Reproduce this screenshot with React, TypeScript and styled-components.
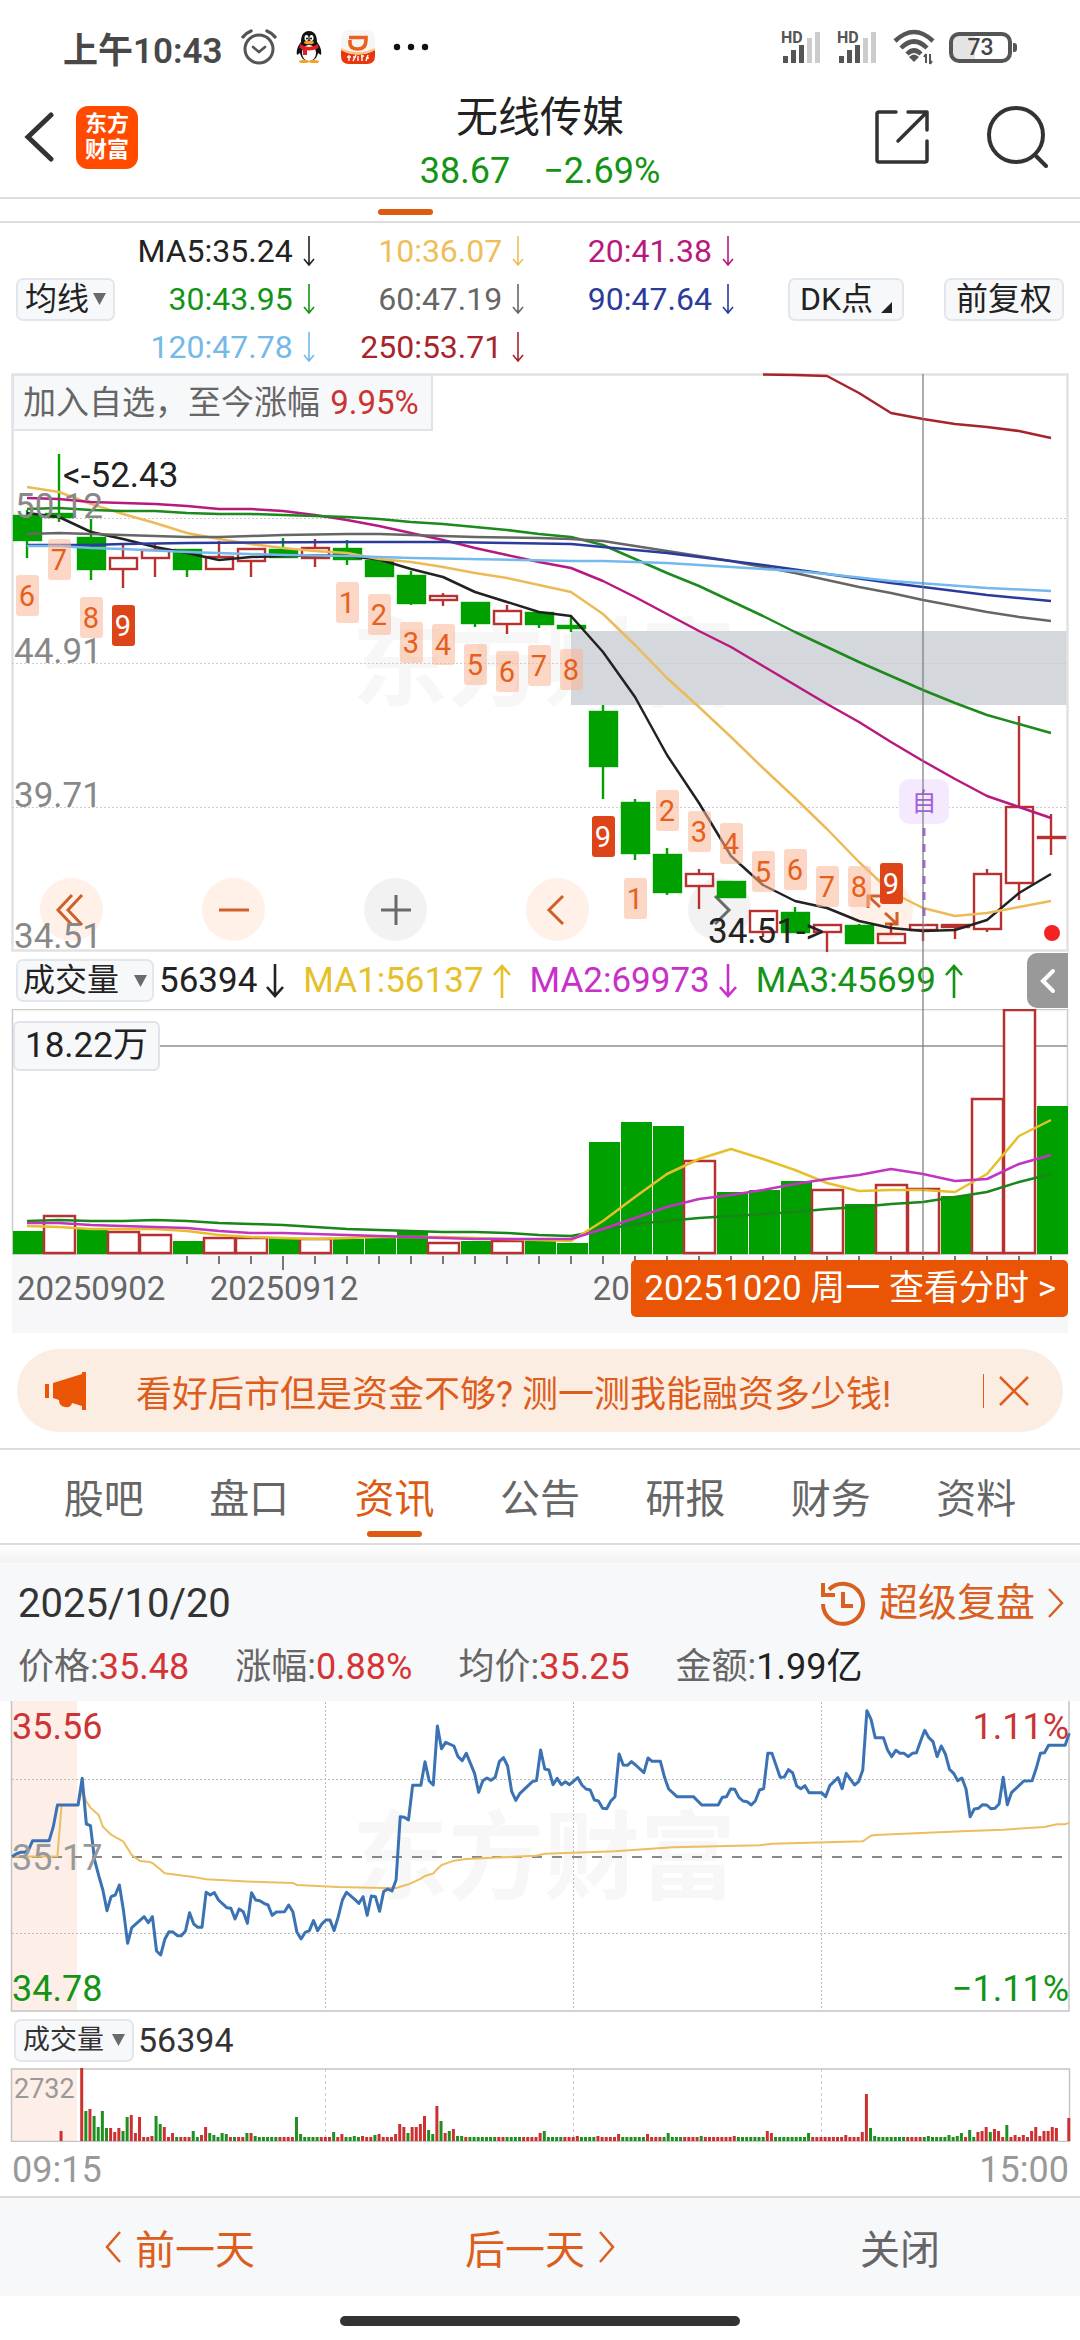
import React from 'react';
import styled, { createGlobalStyle } from 'styled-components';

const GlobalStyle = createGlobalStyle`
  * { box-sizing: border-box; }
  body {
    margin: 0;
    background: #fff;
    color: #222;
    font-family: Roboto, 'Noto Sans CJK SC', sans-serif;
  }
  button, select { font: inherit; color: inherit; border: 0; background: none; padding: 0; margin: 0; }
  svg { display: block; flex: none; }
`;

const RED = '#b83030';
const GREEN = '#00a000';
const ORANGE = '#dd5a12';

/* ---------- shared pieces ---------- */

const Page = styled.main`
  width: 100%;
  display: flex;
  flex-direction: column;
`;

const IconButton = styled.button`
  display: flex;
  align-items: center;
  justify-content: center;
`;

const SelectBox = styled.label<{ $size: number; $gap: number; $pad: number }>`
  display: flex;
  align-items: center;
  gap: ${(p) => p.$gap}px;
  height: 43px;
  padding: 0 ${(p) => p.$pad}px;
  border: 2px solid #e3e6ec;
  border-radius: 7px;
  background: #f7f8fa;
  font-size: ${(p) => p.$size}px;
  line-height: 39px;
`;

const BareSelect = styled.select`
  appearance: none;
  outline: none;
`;

const Caret = () => (
  <svg width="13" height="12" viewBox="0 0 13 12">
    <path d="M0 0H13L6.5 12Z" fill="#6a6a6a" />
  </svg>
);

type DropProps = { label: string; value: string; size: number; gap: number; pad: number };
const Dropdown = ({ label, value, size, gap, pad }: DropProps) => (
  <SelectBox $size={size} $gap={gap} $pad={pad}>
    <BareSelect aria-label={label} defaultValue={value}>
      <option>{value}</option>
    </BareSelect>
    <Caret />
  </SelectBox>
);

const Arrow = ({ up, thick, color }: { up?: boolean; thick?: boolean; color: string }) => (
  <svg width="18" height="34" viewBox="0 0 18 34" fill="none" stroke={color} strokeWidth={thick ? 2.6 : 1.6}>
    {thick ? (
      <path d={up ? 'M9 34V2M1 11L9 2L17 11' : 'M9 0V32M1 23L9 32L17 23'} />
    ) : (
      <path d="M9 2V31M4 25L9 31L14 25" />
    )}
  </svg>
);

/* ---------- status bar ---------- */

const StatusBar = styled.header`
  display: flex;
  align-items: center;
  height: 94px;
  padding: 0 68px 0 63px;
`;
const StatusGroup = styled.div<{ $gap: number }>`
  display: flex;
  align-items: center;
  gap: ${(p) => p.$gap}px;
`;
const Clock = styled.time`
  font-size: 35px;
  font-weight: 600;
  color: #484848;
`;
const Spacer = styled.div`
  flex: 1;
`;

const AlarmIcon = () => (
  <svg width="36" height="36" viewBox="0 0 36 36" fill="none" stroke="#555" strokeWidth="3" strokeLinecap="round">
    <circle cx="18" cy="20" r="14" />
    <path d="M2 8Q5 4 10 2M34 8Q31 4 26 2" strokeWidth="3.4" />
    <path d="M12 18L18 23L24 18" strokeWidth="2.6" />
  </svg>
);
const PenguinIcon = () => (
  <svg width="28" height="34" viewBox="0 0 28 34">
    <path d="M14 1C8 1 6 6 6 12C3 16 1 20 2 25L5 23C6 28 9 31 14 31C19 31 22 28 23 23L26 25C27 20 25 16 22 12C22 6 20 1 14 1Z" fill="#111" />
    <ellipse cx="14" cy="23" rx="7" ry="8" fill="#fff" />
    <path d="M5 14Q14 20 23 14L23.5 18Q14 23 4.5 18Z" fill="#e11f26" />
    <path d="M8 18L8 25L12 25L12 20Z" fill="#e11f26" />
    <ellipse cx="11.5" cy="8" rx="2" ry="3" fill="#fff" />
    <ellipse cx="16.5" cy="8" rx="2" ry="3" fill="#fff" />
    <circle cx="12" cy="8.5" r="1" />
    <circle cx="16" cy="8.5" r="1" />
    <ellipse cx="14" cy="12.5" rx="5" ry="1.8" fill="#f5a11b" />
    <ellipse cx="9" cy="31.5" rx="5" ry="1.6" fill="#f5a11b" />
    <ellipse cx="19" cy="31.5" rx="5" ry="1.6" fill="#f5a11b" />
  </svg>
);
const RideIcon = () => (
  <svg width="34" height="34" viewBox="0 0 34 34">
    <rect width="34" height="34" rx="8" fill="#f8f6f5" />
    <path d="M0 20Q17 29 34 20V26Q34 34 26 34H8Q0 34 0 26Z" fill="#e8370f" />
    <path d="M0 20Q17 29 34 20V18Q17 26 0 18Z" fill="#f9c48a" />
    <path d="M8 7.500H25V10Q25 19 17 19Q9 19 9 13V10" fill="none" stroke="#e9611c" strokeWidth="3.600" />
    <path d="M6 27H10M8 25V31M12 27H15M12 31L15 25M17 26V31M20 26H23M21 25V31M25 28H28M27 25L25 31" stroke="#fff" strokeWidth="1.400" />
  </svg>
);
const MoreDots = () => (
  <svg width="36" height="8" viewBox="0 0 36 8" fill="#111">
    <circle cx="4" cy="4" r="3.2" />
    <circle cx="18" cy="4" r="3.2" />
    <circle cx="32" cy="4" r="3.2" />
  </svg>
);
const SignalIcon = () => (
  <svg width="42" height="34" viewBox="0 0 42 34">
    <text x="0" y="13" fontSize="16" fontWeight="700" fill="#555">HD</text>
    {[7, 13, 18, 25, 31].map((h, i) => (
      <rect key={i} x={2 + i * 8} y={33 - h} width="5" height={h} fill={i < 3 ? '#555' : '#ccc'} />
    ))}
  </svg>
);
const WifiIcon = () => (
  <svg width="42" height="36" viewBox="0 0 42 36" fill="none" stroke="#555" strokeWidth="4.5">
    <path d="M2 12Q21 -6 40 12" />
    <path d="M8 19Q21 6 34 19" />
    <path d="M14 25Q21 18 28 25" />
    <path d="M21 33L16 28Q21 23 26 28Z" fill="#555" stroke="none" />
    <path d="M33 25V34M31 28L33 25M37 25V35M39 32L37 35" strokeWidth="2" />
  </svg>
);
const Battery = styled.div`
  position: relative;
  width: 63px;
  height: 31px;
  border: 4px solid #555;
  border-radius: 10px;
  background: linear-gradient(90deg, #e4e4e4 40%, #fff 40%);
  font-size: 23px;
  font-weight: 500;
  line-height: 24px;
  text-align: center;
  color: #444;
  &::after {
    content: '';
    position: absolute;
    right: -9px;
    top: 7px;
    width: 4px;
    height: 9px;
    border-radius: 0 3px 3px 0;
    background: #555;
  }
`;

/* ---------- header ---------- */

const Header = styled.header`
  display: grid;
  grid-template-columns: 1fr auto 1fr;
  align-items: start;
  height: 105px;
  padding: 0 22px;
  border-bottom: 2px solid #dcdcdc;
`;
const HeaderSide = styled.div<{ $end?: boolean; $gap: number }>`
  display: flex;
  align-items: center;
  justify-content: ${(p) => (p.$end ? 'flex-end' : 'flex-start')};
  gap: ${(p) => p.$gap}px;
  height: 86px;
  padding-right: ${(p) => (p.$end ? 10 : 0)}px;
`;
const Logo = styled.div`
  width: 62px;
  height: 63px;
  padding: 5px 0;
  border-radius: 12px;
  background: #ff4a00;
  color: #fff;
  font-size: 22px;
  font-weight: 700;
  line-height: 26px;
  text-align: center;
`;
const TitleBlock = styled.div`
  text-align: center;
`;
const Title = styled.h1`
  margin: 0;
  font-size: 42px;
  font-weight: 400;
  line-height: 48px;
`;
const Quote = styled.div`
  display: flex;
  justify-content: center;
  gap: 33px;
  color: #149414;
  font-size: 36px;
  line-height: 58px;
`;
const PagerStrip = styled.div`
  height: 24px;
  padding-top: 10px;
  border-bottom: 2px solid #dcdcdc;
`;
const PagerMark = styled.div`
  width: 55px;
  height: 6px;
  margin-left: 35%;
  border-radius: 3px;
  background: ${ORANGE};
`;

/* ---------- moving average legend ---------- */

const Legend = styled.section`
  display: flex;
  align-items: center;
  height: 150px;
  padding: 2px 16px 0;
`;
const LegendGrid = styled.div`
  flex: 1;
  display: grid;
  grid-template-columns: 203fr 210fr 210fr;
  margin-right: 51px;
`;
const LegendItem = styled.div<{ $color: string }>`
  display: flex;
  align-items: center;
  justify-content: flex-end;
  gap: 7px;
  height: 48px;
  font-size: 32px;
  color: ${(p) => p.$color};
`;
const ChipRow = styled.div`
  display: flex;
  gap: 40px;
`;
const Chip = styled.button`
  display: flex;
  align-items: center;
  gap: 8px;
  height: 43px;
  padding: 0 10px;
  border: 2px solid #e3e6ec;
  border-radius: 7px;
  background: #f7f8fa;
  font-size: 32px;
  line-height: 39px;
`;

const LEGEND = [
  ['MA5:35.24', '#222'],
  ['10:36.07', '#efbe5a'],
  ['20:41.38', '#b8197e'],
  ['30:43.95', '#149414'],
  ['60:47.19', '#666'],
  ['90:47.64', '#2b3b9c'],
  ['120:47.78', '#74b9e8'],
  ['250:53.71', '#a8242c'],
];

/* ---------- candle chart ---------- */

const cx = (i: number) => 27 + 32 * i;
const line = (ys: number[]) => ys.map((y, i) => `${cx(i)},${y}`).join(' ');
const sparse = (pts: number[][]) => pts.map(([i, y]) => `${cx(i)},${y}`).join(' ');

// [isUp, high, bodyTop, bodyBottom, low]
const CANDLES = [
  [0, 510, 516, 540, 558], [0, 454, 514, 517, 522], [0, 519, 538, 569, 580], [1, 545, 558, 569, 588],
  [1, 544, 550, 558, 577], [0, 550, 550, 569, 577], [1, 541, 557, 569, 569], [1, 549, 549, 561, 577],
  [0, 538, 550, 557, 558], [1, 539, 548, 558, 567], [0, 540, 549, 559, 565], [0, 561, 561, 576, 577],
  [0, 571, 576, 603, 605], [1, 593, 596, 600, 606], [0, 603, 603, 623, 627], [1, 605, 611, 624, 634],
  [0, 613, 613, 624, 628], [0, 615, 626, 628, 632], [0, 705, 712, 766, 799], [0, 799, 803, 853, 860],
  [0, 848, 855, 892, 895], [1, 869, 874, 886, 909], [0, 881, 882, 897, 898], [1, 910, 911, 932, 937],
  [0, 907, 913, 932, 932], [1, 924, 925, 932, 952], [0, 924, 926, 943, 944], [1, 923, 934, 943, 943],
  [1, 924, 925, 930, 941], [1, 924, 925, 927, 939], [1, 869, 874, 929, 932], [1, 716, 807, 883, 900],
  [1, 814, 837, 838, 855],
];

// [candle index, digit, top, isFinal]
const TAGS = [
  [0, 6, 575, 0], [1, 7, 539, 0], [2, 8, 597, 0], [3, 9, 605, 1], [10, 1, 582, 0], [11, 2, 594, 0],
  [12, 3, 622, 0], [13, 4, 624, 0], [14, 5, 644, 0], [15, 6, 651, 0], [16, 7, 645, 0], [17, 8, 649, 0],
  [18, 9, 816, 1], [19, 1, 878, 0], [20, 2, 790, 0], [21, 3, 811, 0], [22, 4, 823, 0], [23, 5, 851, 0],
  [24, 6, 849, 0], [25, 7, 866, 0], [26, 8, 866, 0], [27, 9, 863, 1],
];

const MA5 = [513, 517, 532, 539, 547, 553, 560, 557, 556, 555.5, 556, 559.5, 569, 577, 592, 602, 612, 616, 652, 697, 755, 803, 856, 885, 901, 908, 921, 928, 931, 930, 920, 893, 874];
const MA10 = [487, 492, 504, 514, 523, 533, 539, 544, 548, 551, 553, 559, 562, 567, 573, 578, 585, 592, 614, 645, 678, 707, 737, 768, 798, 829, 862, 892, 908, 916, 913, 907, 901];
const MA20 = [498, 499, 502, 503, 504, 506, 509, 509, 511, 515, 520, 526, 533, 540, 548, 555, 562, 568, 581, 597, 614, 631, 647, 666, 685, 704, 722, 742, 761, 779, 796, 807, 818];
const MA30 = [509, 508, 510, 511, 511, 513, 514, 514, 515, 516, 517, 519, 522, 524, 527, 530, 534, 537, 545, 559, 573, 586, 601, 616, 632, 647, 662, 676, 690, 703, 715, 724, 733];
const MA60 = [534, 533, 534, 535, 536, 537, 537, 536, 535, 534.5, 534, 534, 535, 536, 537, 537.5, 538, 539, 541, 546, 551, 556, 561, 567, 573, 580, 587, 593, 600, 606, 612, 617, 621];
const MA90 = [[0, 545], [2, 545], [3, 544], [5, 543], [10, 542], [13, 542], [15, 543], [17, 544], [18, 547], [20, 553], [22, 561], [23, 565], [25, 574], [27, 583], [28, 587], [30, 595], [32, 601]];
const MA120 = [[0, 546], [1, 546], [2, 548], [3, 549], [5, 552], [8, 555], [10, 556], [12, 558], [17, 561], [18, 561], [20, 563], [22, 567], [24, 571], [25, 574], [27, 581], [30, 588], [32, 591]];
const MA250 = [[23, 374.5], [24, 375], [25, 376], [26, 393], [27, 413], [28, 419], [29, 424], [30, 427], [31, 431], [32, 438]];

const ChartStack = styled.section`
  position: relative;
`;
const ChartFrame = styled.div`
  position: relative;
`;
const ChartSvg = styled.svg`
  position: relative;
  width: 100%;
  height: auto;
  pointer-events: none;
`;
const Crosshair = styled.div`
  position: absolute;
  top: 1px;
  bottom: -6px;
  left: 85.4%;
  width: 2px;
  background: rgba(120, 120, 120, 0.6);
  pointer-events: none;
`;
const GainNote = styled.div`
  position: absolute;
  top: 1px;
  left: 12px;
  padding: 0 12px 0 9px;
  border: 2px solid #e0e4ea;
  background: #f7f8fa;
  color: #666;
  font-size: 33px;
  line-height: 53px;
`;
const Rise = styled.span`
  margin-left: 2px;
  color: #cc3333;
`;
const RoundButtons = styled.div`
  position: absolute;
  bottom: 11px;
  left: 40px;
  display: flex;
  gap: 99px;
`;
const RoundButton = styled.button<{ $grey?: boolean }>`
  display: flex;
  align-items: center;
  justify-content: center;
  width: 63px;
  height: 63px;
  border-radius: 50%;
  background: ${(p) => (p.$grey ? '#f2f2f2' : '#fff0e8')};
`;

const ROUND = [
  { name: '移到最左', d: 'M16 1L2 16L16 31M26 1L12 16L26 31' },
  { name: '缩小', d: 'M1 16H31' },
  { name: '放大', d: 'M1 16H31M16 1V31', grey: true },
  { name: '左移', d: 'M21 2L7 16L21 30' },
  { name: '右移', d: 'M11 2L25 16L11 30', grey: true },
  { name: '全屏', d: 'M2 14V2H14M2 2L14 13M31 18V30H19M31 30L19 19' },
];

const PriceChart = () => (
  <ChartFrame>
    <RoundButtons>
      {ROUND.map((b) => (
        <RoundButton key={b.name} $grey={b.grey} aria-label={b.name}>
          <svg width="32" height="32" viewBox="0 0 32 32" fill="none" overflow="visible" stroke={b.grey ? '#6a6a6a' : '#d0602a'} strokeWidth="3">
            <path d={b.d} />
          </svg>
        </RoundButton>
      ))}
    </RoundButtons>
    <ChartSvg viewBox="0 373 1080 579" fill="none">
      <text x="352" y="698" fontSize="96" fontWeight="700" fill="#f7f7f7">东方财富</text>
      <rect x="571" y="631" width="496" height="74" fill="#d4d7dc" />
      <rect x="12.5" y="374.5" width="1055" height="576" stroke="#e2e2e2" strokeWidth="2.5" />
      {[518, 663, 807].map((y) => (
        <line key={y} x1="12" x2="1067" y1={y + 0.5} y2={y + 0.5} stroke="#ccc" strokeDasharray="2 2" />
      ))}
      {CANDLES.map(([up, hi, top, bottom, lo], i) => (
        <g key={i} stroke={up ? RED : GREEN} strokeWidth="2.4">
          <path d={`M${cx(i)} ${hi}V${top}M${cx(i)} ${bottom}V${lo}`} />
          <rect x={cx(i) - 13} y={top} width="27" height={bottom - top} fill={up ? 'none' : GREEN} />
        </g>
      ))}
      <g strokeWidth="2.5" strokeLinejoin="round">
        <polyline points={line(MA5)} stroke="#222" />
        <polyline points={line(MA10)} stroke="#ecbb58" />
        <polyline points={line(MA20)} stroke="#b8197e" />
        <polyline points={line(MA30)} stroke="#1c8a1c" />
        <polyline points={line(MA60)} stroke="#666" />
        <polyline points={sparse(MA90)} stroke="#2b3b9c" />
        <polyline points={sparse(MA120)} stroke="#74b9ee" />
        <polyline points={sparse(MA250)} stroke="#a8242c" />
      </g>
      <g fontSize="29" textAnchor="middle">
        {TAGS.map(([i, n, y, final]) => (
          <g key={i}>
            <rect x={cx(i) - 11} y={y} width="23" height="41" rx="3" fill={final ? '#dd4417' : '#fbb798'} fillOpacity={final ? 1 : 0.55} />
            <text x={cx(i)} y={y + 31} fill={final ? '#fff' : '#e4601c'}>{n}</text>
          </g>
        ))}
      </g>
      <g fontSize="35" fill="#888">
        <text x="15" y="518">50.12</text>
        <text x="14" y="663">44.91</text>
        <text x="14" y="807">39.71</text>
        <text x="14" y="948">34.51</text>
      </g>
      <g fontSize="35" fill="#222">
        <text x="63" y="487">&lt;-52.43</text>
        <text x="708" y="943">34.51-&gt;</text>
      </g>
      <line x1="924" x2="924" y1="828" y2="925" stroke="#a06ae0" strokeWidth="3" strokeDasharray="8 8" />
      <rect x="899" y="779" width="50" height="45" rx="10" fill="#f5eafd" />
      <text x="924" y="811" fontSize="25" textAnchor="middle" fill="#a060e0">自</text>
      <circle cx="1052" cy="933" r="8" fill="#f42222" />
    </ChartSvg>
    <GainNote>
      加入自选，至今涨幅 <Rise>9.95%</Rise>
    </GainNote>
  </ChartFrame>
);

/* ---------- volume ---------- */

const VolumeBarRow = styled.div`
  display: flex;
  align-items: center;
  height: 57px;
  padding-left: 16px;
  padding-right: 12px;
`;
const VolumeValue = styled.div<{ $color: string }>`
  display: flex;
  align-items: center;
  gap: 9px;
  margin-right: 19px;
  font-size: 35px;
  color: ${(p) => p.$color};
`;
const DropSlot = styled.div`
  margin-right: 5px;
`;
const CollapseTab = styled(IconButton)`
  width: 41px;
  height: 55px;
  margin-left: auto;
  border-radius: 10px 0 0 10px;
  background: #999;
`;
const VolumeMax = styled.div`
  position: absolute;
  top: 12px;
  left: 13px;
  padding: 0 10px;
  border: 2px solid #e0e4ea;
  border-radius: 6px;
  background: #f7f8fa;
  font-size: 35px;
  line-height: 46px;
`;

// [isUp, top]
const VOLUMES = [
  [0, 1231], [1, 1216], [0, 1229], [1, 1232], [1, 1235], [0, 1241], [1, 1238], [1, 1238], [0, 1238], [1, 1239], [0, 1239],
  [0, 1238], [0, 1231], [1, 1243], [0, 1241], [1, 1241], [0, 1241], [0, 1243], [0, 1142], [0, 1122], [0, 1126], [1, 1161],
  [0, 1192], [0, 1190], [0, 1181], [1, 1190], [0, 1204], [1, 1185], [1, 1189], [0, 1196], [1, 1099], [1, 1010], [0, 1106],
];
const VMA1 = [1226, 1227, 1229, 1229, 1229, 1231, 1235, 1237, 1238, 1239, 1238, 1237, 1237, 1237, 1238, 1239, 1240, 1241, 1221, 1197, 1174, 1159, 1149, 1159, 1170, 1183, 1191, 1190, 1190, 1192, 1174, 1136, 1120];
const VMA2 = [1223, 1223, 1225, 1226, 1227, 1228, 1231, 1233, 1233, 1234, 1235, 1236, 1237, 1238, 1239, 1239, 1239, 1239, 1229, 1218, 1207, 1199, 1195, 1190, 1184, 1179, 1175, 1169, 1174, 1181, 1179, 1164, 1155];
const VMA3 = [1221, 1220, 1221, 1221, 1220, 1221, 1223, 1224, 1225, 1227, 1229, 1230, 1231, 1232, 1232, 1233, 1235, 1236, 1230, 1224, 1221, 1218, 1216, 1214, 1212, 1209, 1207, 1204, 1202, 1197, 1192, 1182, 1174];

const VolumeChart = () => (
  <ChartFrame>
    <ChartSvg viewBox="0 1009 1080 246" fill="none">
      <rect x="12.5" y="1009.5" width="1055" height="245" stroke="#ccc" strokeWidth="1.5" />
      <line x1="158" x2="1067" y1="1046" y2="1046" stroke="#aaa" strokeWidth="2" />
      {VOLUMES.map(([up, top], i) =>
        up ? (
          <rect key={i} x={cx(i) - 15} y={top} width="31" height={1253 - top} fill="#fff" stroke={RED} strokeWidth="2.5" />
        ) : (
          <rect key={i} x={cx(i) - 14} y={top} width="31" height={1254 - top} fill={GREEN} />
        ),
      )}
      <g strokeWidth="2.5" strokeLinejoin="round">
        <polyline points={line(VMA3)} stroke="#1a861a" />
        <polyline points={line(VMA1)} stroke="#e6c02a" />
        <polyline points={line(VMA2)} stroke="#c234c2" />
      </g>
    </ChartSvg>
    <VolumeMax>18.22万</VolumeMax>
  </ChartFrame>
);

const DayButton = styled.button`
  position: absolute;
  top: 5px;
  right: 12px;
  height: 57px;
  padding: 0 12px 0 13px;
  border-radius: 5px;
  background: #e95504;
  color: #fff;
  font-size: 35px;
  line-height: 55px;
  white-space: nowrap;
`;

const DateAxis = () => (
  <ChartFrame>
    <ChartSvg viewBox="0 0 1080 78">
      <rect x="12" width="1056" height="78" fill="#f7f7fa" />
      {Array.from({ length: 28 }, (_, n) => n + 5).map((i) => (
        <line key={i} x1={cx(i)} x2={cx(i)} y1="1" y2={i % 12 === 8 ? 15 : 9} stroke="#777" strokeWidth="2" />
      ))}
      <g fontSize="33" fill="#666">
        <text x="17" y="45">20250902</text>
        <text x="284" y="45" textAnchor="middle">20250912</text>
        <text x="667" y="45" textAnchor="middle">20250930</text>
      </g>
    </ChartSvg>
    <DayButton>20251020 周一 查看分时 &gt;</DayButton>
  </ChartFrame>
);

/* ---------- promo banner ---------- */

const Banner = styled.aside`
  display: flex;
  align-items: center;
  height: 83px;
  margin: 16px 17px;
  padding: 0 34px 0 27px;
  border-radius: 42px;
  background: #fcede3;
  color: #dd5e1c;
`;
const BannerLink = styled.a`
  flex: 1;
  margin-left: 49px;
  color: inherit;
  font-size: 36px;
  text-decoration: none;
  white-space: nowrap;
`;
const BannerClose = styled(IconButton)`
  height: 34px;
  padding-left: 15px;
  border-left: 1px solid #dd5e1c;
`;

/* ---------- tabs ---------- */

const Tabs = styled.nav`
  display: flex;
  height: 97px;
  padding: 0 31px;
  border-top: 2px solid #dcdcdc;
  border-bottom: 2px solid #dcdcdc;
`;
const Tab = styled.button<{ $active?: boolean }>`
  position: relative;
  flex: 1;
  padding-bottom: 2px;
  font-size: 40px;
  color: ${(p) => (p.$active ? ORANGE : '#666')};
  &::after {
    content: '';
    display: ${(p) => (p.$active ? 'block' : 'none')};
    position: absolute;
    bottom: 6px;
    left: 50%;
    width: 55px;
    height: 6px;
    margin-left: -28px;
    border-radius: 3px;
    background: ${ORANGE};
  }
`;
const Shade = styled.div`
  height: 18px;
  background: linear-gradient(#fff, #f2f2f2);
`;

/* ---------- intraday panel ---------- */

const DayHead = styled.section`
  height: 138px;
  padding: 0 16px 0 18px;
  background: #f7f8fa;
`;
const DayTitleRow = styled.div`
  display: flex;
  align-items: center;
  justify-content: space-between;
  height: 80px;
  font-size: 40px;
  color: #333;
`;
const ReviewLink = styled.a`
  display: flex;
  align-items: center;
  gap: 13px;
  color: #d9601f;
  font-size: 39px;
  line-height: 54px;
  text-decoration: none;
`;
const Stats = styled.dl`
  display: flex;
  gap: 46px;
  margin: 0;
  font-size: 36px;
  line-height: 48px;
`;
const Stat = styled.div`
  display: flex;
`;
const StatName = styled.dt`
  color: #666;
`;
const StatValue = styled.dd<{ $red?: boolean }>`
  margin: 0;
  color: ${(p) => (p.$red ? '#d63434' : '#222')};
`;

const STATS: [string, string, boolean][] = [
  ['价格:', '35.48', true],
  ['涨幅:', '0.88%', true],
  ['均价:', '35.25', true],
  ['金额:', '1.99亿', false],
];

// [minute, level]; three levels make one unit of chart height
const TREND = [
  [0, 500], [1, 492], [2, 487], [3, 487], [4, 480], [5, 452], [9, 452], [10, 410], [11, 345], [16, 345], [17, 265], [18, 402], [19, 407],
  [20, 510], [21, 557], [22, 600], [23, 662], [24, 620], [25, 615], [26, 585], [27, 662], [28, 760], [29, 713], [32, 680], [33, 698],
  [34, 680], [35, 783], [36, 795], [37, 748], [38, 725], [39, 726], [40, 737], [41, 737], [42, 723], [43, 668], [44, 702], [45, 712],
  [46, 712], [47, 607], [48, 615], [49, 608], [50, 630], [52, 653], [53, 655], [54, 687], [55, 657], [56, 665], [57, 700], [58, 608],
  [59, 630], [60, 632], [61, 640], [62, 645], [63, 676], [64, 666], [66, 665], [67, 645], [68, 665], [69, 727], [70, 747], [71, 727],
  [72, 722], [73, 692], [74, 722], [75, 702], [76, 690], [77, 690], [78, 722], [79, 680], [80, 630], [81, 607], [83, 628], [84, 640],
  [85, 620], [86, 676], [87, 618], [88, 620], [89, 664], [90, 604], [91, 597], [92, 603], [93, 570], [94, 380], [95, 382], [96, 390],
  [97, 286], [99, 286], [100, 215], [101, 272], [102, 285], [103, 108], [104, 176], [105, 157], [107, 168], [108, 200], [109, 212],
  [110, 190], [112, 250], [113, 307], [114, 272], [115, 264], [116, 271], [117, 262], [118, 215], [119, 203], [120, 228], [121, 305],
  [122, 331], [123, 310], [126, 275], [127, 272], [128, 180], [129, 237], [130, 240], [131, 284], [132, 265], [133, 284], [134, 275],
  [135, 284], [137, 263], [138, 285], [139, 297], [140, 300], [141, 330], [142, 333], [143, 355], [144, 356], [145, 333], [146, 320],
  [147, 192], [148, 225], [149, 226], [150, 215], [151, 225], [153, 248], [154, 204], [155, 214], [157, 214], [158, 262], [159, 297],
  [161, 320], [165, 320], [167, 345], [171, 345], [172, 322], [173, 320], [174, 297], [175, 298], [176, 322], [177, 333], [178, 335],
  [179, 345], [180, 332], [181, 300], [182, 296], [183, 190], [184, 190], [186, 262], [187, 261], [188, 239], [189, 248], [190, 288],
  [191, 296], [192, 287], [193, 308], [196, 308], [197, 320], [198, 287], [200, 263], [201, 296], [202, 250], [204, 285], [205, 275],
  [206, 240], [207, 62], [208, 88], [209, 143], [211, 143], [212, 180], [213, 200], [214, 181], [215, 190], [216, 190], [217, 200],
  [218, 190], [219, 188], [220, 153], [221, 121], [222, 143], [223, 155], [224, 200], [225, 168], [226, 192], [227, 238], [228, 250],
  [229, 272], [230, 264], [231, 297], [232, 380], [233, 357], [234, 355], [235, 344], [236, 345], [237, 356], [238, 355], [239, 342],
  [240, 262], [241, 344], [242, 308], [245, 273], [247, 272], [248, 235], [249, 190], [250, 188], [251, 166], [255, 166], [256, 130],
];
const AVERAGE = [
  [0, 500], [11, 499], [12, 345], [16, 345], [17, 300], [18, 335], [19, 353], [21, 375], [22, 410], [24, 434], [27, 455], [29, 495],
  [31, 513], [33, 515], [34, 519], [37, 550], [44, 561], [47, 568], [58, 575], [68, 579], [69, 585], [79, 591], [90, 594], [93, 594],
  [96, 583], [99, 566], [100, 558], [102, 550], [103, 537], [104, 525], [107, 512], [110, 507], [120, 501], [127, 497], [129, 491],
  [146, 484], [160, 472], [181, 466], [184, 461], [206, 454], [208, 437], [209, 435], [230, 424], [240, 419], [250, 411], [253, 403],
  [255, 403], [256, 398],
];
const mx = (m: number) => 12 + m * 4.13;
const trend = (pts: number[][]) => pts.map(([m, v]) => `${mx(m)},${v / 3 - 11}`).join(' ');

const TrendChart = () => (
  <ChartSvg viewBox="0 0 1080 311" fill="none">
    <text x="352" y="190" fontSize="96" fontWeight="700" fill="#f7f7f7">东方财富</text>
    <rect x="12" y="0" width="65" height="310" fill="#fdeee7" />
    <g stroke="#bbb" strokeWidth="1" strokeDasharray="2 2">
      {[325.5, 573.5, 821.5].map((x) => <line key={x} x1={x} x2={x} y1="1" y2="310" />)}
      {[78.5, 232.5].map((y) => <line key={y} x1="12" x2="1069" y1={y} y2={y} />)}
    </g>
    <path d="M11.5 0V310H1069V0" stroke="#c4c4c4" strokeWidth="1.5" />
    <line x1="12" x2="1069" y1="156" y2="156" stroke="#888" strokeWidth="2" strokeDasharray="10 10" />
    <polyline points={trend(AVERAGE)} stroke="#ecbf5e" strokeWidth="2" />
    <polyline points={trend(TREND)} stroke="#3a72b4" strokeWidth="3" strokeLinejoin="round" />
    <g fontSize="36">
      <text x="12" y="38" fill="#cc3333">35.56</text>
      <text x="12" y="169" fill="#999">35.17</text>
      <text x="12" y="300" fill="#149414">34.78</text>
      <text x="1069" y="38" fill="#cc3333" textAnchor="end">1.11%</text>
      <text x="1069" y="300" fill="#149414" textAnchor="end">−1.11%</text>
    </g>
  </ChartSvg>
);

const SubRow = styled.div`
  display: flex;
  align-items: center;
  gap: 4px;
  height: 56px;
  padding-left: 14px;
  font-size: 34px;
  color: #333;
`;

const UP_TICKS: Record<number, number> = {
  12: 10, 17: 73, 19: 32, 24: 13, 25: 9, 26: 13, 29: 26, 30: 8, 31: 24, 32: 4, 33: 4, 34: 5, 37: 14, 38: 4, 39: 8, 41: 4, 43: 4,
  46: 6, 47: 14, 58: 8, 80: 7, 85: 5, 89: 7, 93: 7, 94: 17, 95: 14, 97: 14, 98: 14, 99: 17, 100: 25, 103: 35, 105: 8, 107: 12,
  110: 4, 118: 4, 119: 4, 128: 8, 137: 5, 142: 5, 147: 7, 154: 7, 172: 4, 175: 5, 183: 10, 184: 8, 202: 6, 206: 9, 207: 47,
  217: 4, 234: 9, 235: 10, 236: 14, 238: 12, 239: 10, 243: 6, 245: 6, 246: 4, 247: 10, 248: 14, 249: 5, 250: 10, 251: 10,
  252: 14, 253: 13, 256: 23,
};
const DOWN_TICKS: Record<number, number> = {
  18: 30, 20: 25, 21: 14, 22: 30, 23: 13, 27: 10, 28: 24, 35: 25, 36: 17, 44: 10, 45: 4, 48: 8, 49: 6, 50: 4, 51: 8, 52: 7,
  57: 8, 59: 5, 69: 24, 70: 7, 78: 9, 83: 5, 88: 6, 96: 8, 101: 11, 102: 7, 104: 20, 106: 10, 108: 5, 109: 5, 129: 10, 138: 4,
  148: 4, 158: 4, 159: 8, 167: 5, 185: 4, 193: 8, 208: 13, 209: 5, 222: 5, 227: 6, 228: 4, 229: 5, 230: 8, 232: 11, 233: 4,
  237: 9, 241: 16,
};
const QUIET_GREEN = [[40, 40], [54, 54], [60, 64], [71, 74], [81, 84], [111, 117], [120, 123], [130, 133], [139, 141], [149, 153], [160, 162], [176, 182], [186, 193], [210, 216], [221, 226]];

const MinuteVolume = () => (
  <ChartSvg viewBox="0 0 1080 74" fill="none">
    <rect x="12" y="1" width="65" height="72" fill="#fdeee7" />
    <g stroke="#ccc" strokeDasharray="3 3">
      {[325.5, 573.5, 821.5].map((x) => <line key={x} x1={x} x2={x} y1="1" y2="73" />)}
    </g>
    <rect x="11.5" y="1" width="1058" height="72.5" stroke="#c4c4c4" strokeWidth="1.5" />
    <text x="14" y="30" fontSize="27" fill="#999">2732</text>
    {Array.from({ length: 245 }, (_, n) => n + 12).map((m) => {
      const quiet = m >= 38 && m < 254 ? 4 : 0;
      const h = UP_TICKS[m] ?? DOWN_TICKS[m] ?? quiet;
      const down = m in DOWN_TICKS || (!(m in UP_TICKS) && QUIET_GREEN.some(([a, b]) => m >= a && m <= b));
      return <rect key={m} x={mx(m) - 2} y={73 - h} width="3" height={h} fill={down ? '#1f8f1f' : '#cc3030'} />;
    })}
  </ChartSvg>
);

const TimeRow = styled.div`
  display: flex;
  align-items: center;
  justify-content: space-between;
  height: 54px;
  padding: 2px 11px 0 12px;
  font-size: 36px;
  color: #999;
`;
const Footer = styled.footer`
  display: grid;
  grid-template-columns: repeat(3, 1fr);
  height: 100px;
  border-top: 2px solid #dcdcdc;
  background: #f7f8fa;
`;
const FooterButton = styled.button<{ $muted?: boolean }>`
  display: flex;
  align-items: center;
  justify-content: center;
  gap: 13px;
  font-size: 40px;
  color: ${(p) => (p.$muted ? '#666' : '#dd5e1c')};
`;
const HomeArea = styled.div`
  display: flex;
  justify-content: center;
  height: 44px;
  padding-top: 20px;
`;
const HomeBar = styled.div`
  width: 37%;
  height: 10px;
  border-radius: 5px;
  background: #333;
`;

const Chevron = ({ left }: { left?: boolean }) => (
  <svg width="17" height="32" viewBox="0 0 17 32" fill="none" stroke="currentColor" strokeWidth="2.5">
    <path d={left ? 'M15 1L2 16L15 31' : 'M2 1L15 16L2 31'} />
  </svg>
);

const TABS = ['股吧', '盘口', '资讯', '公告', '研报', '财务', '资料'];

export default function App() {
  return (
    <Page>
      <GlobalStyle />
      <StatusBar>
        <StatusGroup $gap={18}>
          <Clock>上午10:43</Clock>
          <AlarmIcon />
          <PenguinIcon />
          <RideIcon />
          <MoreDots />
        </StatusGroup>
        <Spacer />
        <StatusGroup $gap={14}>
          <SignalIcon />
          <SignalIcon />
          <WifiIcon />
          <Battery>73</Battery>
        </StatusGroup>
      </StatusBar>

      <Header>
        <HeaderSide $gap={22}>
          <IconButton aria-label="返回">
            <svg width="32" height="52" viewBox="0 0 32 52" fill="none" stroke="#333" strokeWidth="5" strokeLinecap="round">
              <path d="M29 4L6 26L29 48" />
            </svg>
          </IconButton>
          <Logo>东方<br />财富</Logo>
        </HeaderSide>
        <TitleBlock>
          <Title>无线传媒</Title>
          <Quote>
            <span>38.67</span>
            <span>−2.69%</span>
          </Quote>
        </TitleBlock>
        <HeaderSide $end $gap={56}>
          <IconButton aria-label="分享">
            <svg width="56" height="56" viewBox="0 0 56 56" fill="none" stroke="#333" strokeWidth="3.5" strokeLinecap="round" strokeLinejoin="round">
              <path d="M22 3H5Q3 3 3 5V51Q3 53 5 53H51Q53 53 53 51V32" />
              <path d="M34 3H53V21M53 3L24 32" />
            </svg>
          </IconButton>
          <IconButton aria-label="搜索">
            <svg width="62" height="62" viewBox="0 0 62 62" fill="none" stroke="#333" strokeWidth="4" strokeLinecap="round">
              <circle cx="30" cy="29" r="27" />
              <path d="M49 49L60 60" />
            </svg>
          </IconButton>
        </HeaderSide>
      </Header>
      <PagerStrip>
        <PagerMark />
      </PagerStrip>

      <Legend>
        <Dropdown label="指标" value="均线" size={32} gap={3} pad={7} />
        <LegendGrid>
          {LEGEND.map(([text, color]) => (
            <LegendItem key={text} $color={color}>
              {text}
              <Arrow color={color} />
            </LegendItem>
          ))}
        </LegendGrid>
        <ChipRow>
          <Chip>
            DK点
            <svg width="11" height="28" viewBox="0 0 11 28">
              <path d="M11 17V28H0Z" fill="#222" />
            </svg>
          </Chip>
          <Chip>前复权</Chip>
        </ChipRow>
      </Legend>

      <ChartStack>
        <PriceChart />
        <VolumeBarRow>
          <DropSlot>
            <Dropdown label="副图指标" value="成交量" size={32} gap={14} pad={5} />
          </DropSlot>
          <VolumeValue $color="#222">56394<Arrow thick color="#222" /></VolumeValue>
          <VolumeValue $color="#e6c02a">MA1:56137<Arrow thick up color="#e6c02a" /></VolumeValue>
          <VolumeValue $color="#c930c9">MA2:69973<Arrow thick color="#c930c9" /></VolumeValue>
          <VolumeValue $color="#149414">MA3:45699<Arrow thick up color="#149414" /></VolumeValue>
          <CollapseTab aria-label="展开">
            <svg width="16" height="26" viewBox="0 0 16 26" fill="none" stroke="#fff" strokeWidth="4" strokeLinecap="round">
              <path d="M13 3L3 13L13 23" />
            </svg>
          </CollapseTab>
        </VolumeBarRow>
        <VolumeChart />
        <Crosshair />
      </ChartStack>
      <DateAxis />

      <Banner>
        <svg width="43" height="38" viewBox="0 0 43 38" fill="#e95504">
          <path d="M1 12H5V26H1ZM9 11L38 2V0H42V38H38V34L28 31Q27 36 21 35Q15 34 15 28L9 26Z" />
        </svg>
        <BannerLink href="#margin">看好后市但是资金不够? 测一测我能融资多少钱!</BannerLink>
        <BannerClose aria-label="关闭广告">
          <svg width="30" height="30" viewBox="0 0 30 30" fill="none" stroke="currentColor" strokeWidth="2.5">
            <path d="M1 1L29 29M29 1L1 29" />
          </svg>
        </BannerClose>
      </Banner>

      <Tabs>
        {TABS.map((t) => (
          <Tab key={t} $active={t === '资讯'}>{t}</Tab>
        ))}
      </Tabs>
      <Shade />

      <DayHead>
        <DayTitleRow>
          2025/10/20
          <ReviewLink href="#review">
            <svg width="46" height="46" viewBox="0 0 46 46" fill="none" stroke="currentColor" strokeWidth="4">
              <path d="M3 24A20 20 0 1 0 9 9.5" />
              <path d="M3 3V15H15" />
              <path d="M23 12V26H33" />
            </svg>
            超级复盘
            <svg width="16" height="30" viewBox="0 0 16 30" fill="none" stroke="currentColor" strokeWidth="2.5">
              <path d="M1 1L14 15L1 29" />
            </svg>
          </ReviewLink>
        </DayTitleRow>
        <Stats>
          {STATS.map(([name, value, red]) => (
            <Stat key={name}>
              <StatName>{name}</StatName>
              <StatValue $red={red}>{value}</StatValue>
            </Stat>
          ))}
        </Stats>
      </DayHead>
      <TrendChart />
      <SubRow>
        <Dropdown label="分时副图指标" value="成交量" size={27} gap={8} pad={7} />
        56394
      </SubRow>
      <MinuteVolume />
      <TimeRow>
        <span>09:15</span>
        <span>15:00</span>
      </TimeRow>

      <Footer>
        <FooterButton><Chevron left />前一天</FooterButton>
        <FooterButton>后一天<Chevron /></FooterButton>
        <FooterButton $muted>关闭</FooterButton>
      </Footer>
      <HomeArea>
        <HomeBar />
      </HomeArea>
    </Page>
  );
}
